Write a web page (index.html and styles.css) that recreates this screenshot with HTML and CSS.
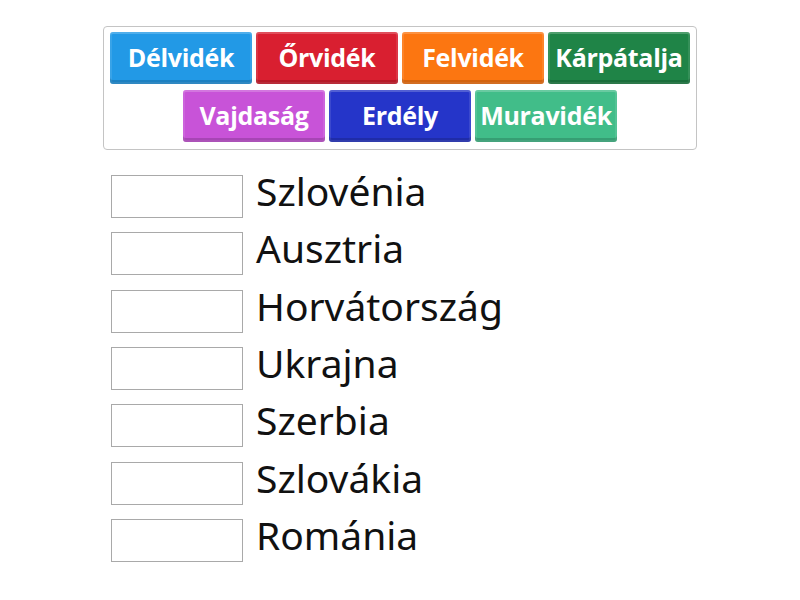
FILE: index.html
```html
<!DOCTYPE html>
<html lang="hu">
<head>
<meta charset="utf-8">
<link rel="stylesheet" href="styles.css">
</head>
<body>
<div class="page">
  <div class="bank">
    <div class="tile t-blue">Délvidék</div>
    <div class="tile t-red">Őrvidék</div>
    <div class="tile t-orange">Felvidék</div>
    <div class="tile t-green">Kárpátalja</div>
    <div class="tile t-violet">Vajdaság</div>
    <div class="tile t-navy">Erdély</div>
    <div class="tile t-mint">Muravidék</div>
  </div>
  <div class="list">
    <div class="row"><div class="slot"></div><div class="label">Szlovénia</div></div>
    <div class="row"><div class="slot"></div><div class="label">Ausztria</div></div>
    <div class="row"><div class="slot"></div><div class="label">Horvátország</div></div>
    <div class="row"><div class="slot"></div><div class="label">Ukrajna</div></div>
    <div class="row"><div class="slot"></div><div class="label">Szerbia</div></div>
    <div class="row"><div class="slot"></div><div class="label">Szlovákia</div></div>
    <div class="row"><div class="slot"></div><div class="label">Románia</div></div>
  </div>
</div>
</body>
</html>
```

FILE: styles.css
```css
html, body {
  margin: 0;
  padding: 0;
  background: #ffffff;
  font-family: "Open Sans", "Liberation Sans", sans-serif;
}
.page {
  width: 800px;
  height: 600px;
  padding-top: 26px;
  box-sizing: border-box;
}
.bank {
  width: 594px;
  height: 124px;
  margin: 0 0 0 103px;
  box-sizing: border-box;
  border: 1px solid #c4c4c4;
  border-radius: 4px;
  padding: 5px 6px 0 6px;
  display: flex;
  flex-wrap: wrap;
  justify-content: center;
  align-content: flex-start;
  gap: 6px 4px;
}
.tile {
  width: 142px;
  height: 52px;
  box-sizing: border-box;
  border-radius: 3px;
  color: #fff;
  font-weight: 700;
  font-size: 25px;
  display: flex;
  align-items: center;
  justify-content: center;
  padding-bottom: 3px;
  box-shadow: inset 0 -4px 0 rgba(0,0,0,0.16), inset 0 0 0 2px rgba(255,255,255,0.1), inset 0 2px 0 rgba(255,255,255,0.12);
  letter-spacing: -0.3px;
}
.t-blue { background: #2299e6; }
.t-red { background: #d91f30; }
.t-orange { background: #fc7611; }
.t-green { background: #1f8447; }
.t-violet { background: #c853d8; }
.t-navy { background: #2535c9; }
.t-mint { background: #41bd89; }
.list {
  margin: 25px 0 0 111px;
  display: flex;
  flex-direction: column;
}
.row {
  height: 57.33px;
  display: flex;
  align-items: flex-start;
}
.slot {
  width: 132px;
  height: 43px;
  box-sizing: border-box;
  border: 1px solid #a9a9a9;
  background: #fff;
}
.label {
  margin-left: 13px;
  font-family: "Noto Sans", "Open Sans", sans-serif;
  font-size: 39px;
  line-height: 40px;
  color: #111;
  margin-top: -4px;
}
```
